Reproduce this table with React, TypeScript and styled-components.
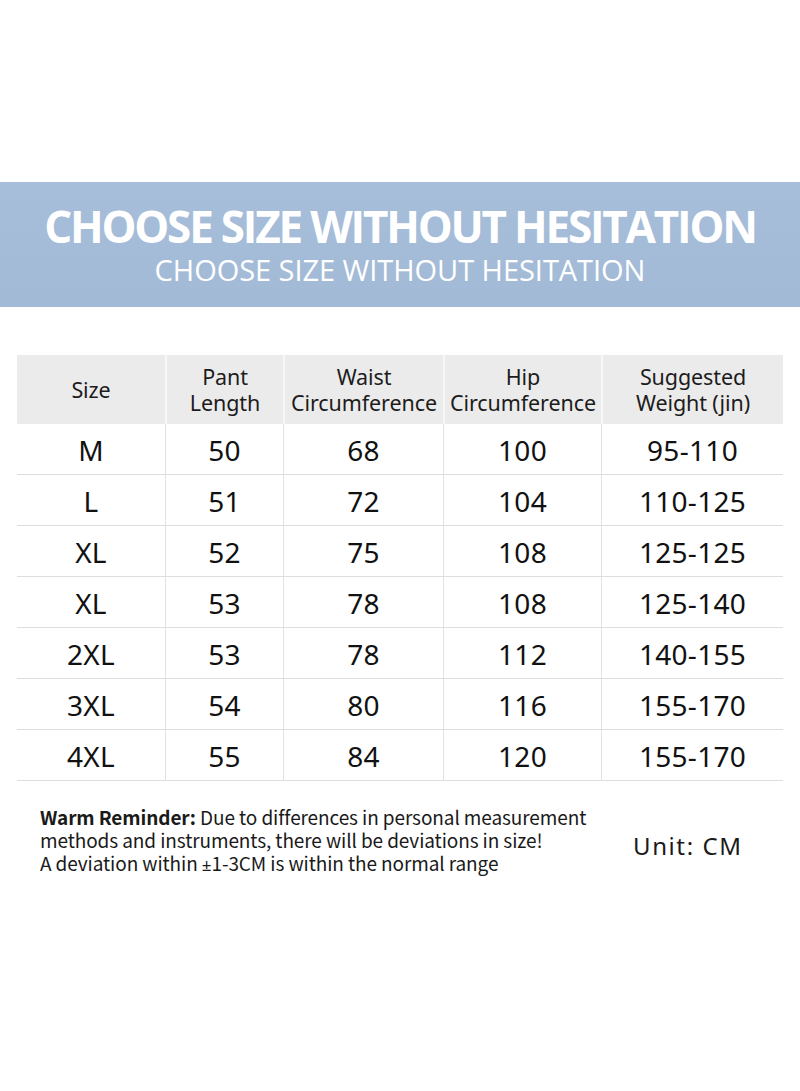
import React from "react";
import styled, { createGlobalStyle } from "styled-components";

const Global = createGlobalStyle`
  html, body { margin: 0; padding: 0; background: #ffffff; }
  body { font-family: "Noto Sans", "Open Sans", sans-serif; color: #1a1a1a; }
`;

const Page = styled.div`
  width: 800px;
  height: 1091px;
  background: #ffffff;
  padding-top: 182px;
  box-sizing: border-box;
  display: flex;
  flex-direction: column;
`;

const Banner = styled.header`
  height: 125px;
  background: linear-gradient(180deg, #a6bed9 0%, #a2bad6 100%);
  display: flex;
  flex-direction: column;
  align-items: center;
  justify-content: flex-start;
  padding-top: 17px;
  box-sizing: border-box;
  color: #ffffff;
`;

const Title = styled.h1`
  margin: 0;
  font-family: "Open Sans", "Noto Sans", sans-serif;
  font-weight: 700;
  font-size: 44px;
  line-height: 54px;
  letter-spacing: -2.2px;
  white-space: nowrap;
`;

const Subtitle = styled.h2`
  margin: 0;
  font-family: "Open Sans", "Noto Sans", sans-serif;
  font-weight: 400;
  font-size: 29px;
  line-height: 34px;
  letter-spacing: -0.05px;
  white-space: nowrap;
`;

const Table = styled.div`
  margin: 48px 17px 0 17px;
  display: grid;
  grid-template-columns: 148px 118px 160px 158px 182px;
`;

const HeadCell = styled.div<{ $first?: boolean }>`
  height: 69px;
  background: #ebebeb;
  border-left: ${(p) => (p.$first ? "none" : "2px solid #f7f7f7")};
  display: flex;
  align-items: center;
  justify-content: center;
  text-align: center;
  font-size: 21.5px;
  line-height: 26px;
  color: #1c1c1c;
  white-space: nowrap;
  letter-spacing: -0.1px;
  padding-top: 1px;
  box-sizing: border-box;
`;

const Cell = styled.div<{ $first?: boolean }>`
  height: 51px;
  border-left: ${(p) => (p.$first ? "none" : "1px solid #e2e2e2")};
  border-bottom: 1px solid #dedede;
  display: flex;
  align-items: center;
  justify-content: center;
  font-size: 28px;
  color: #111111;
  box-sizing: border-box;
  padding-top: 2px;
  letter-spacing: 0.3px;
`;

const Note = styled.div`
  margin: 24px 0 0 40px;
  display: flex;
  align-items: center;
`;

const NoteText = styled.p`
  margin: 0;
  width: 560px;
  font-family: "Noto Sans CJK SC", "Noto Sans", sans-serif;
  font-size: 19px;
  line-height: 23px;
  letter-spacing: -0.1px;
  white-space: nowrap;
  color: #1a1a1a;
`;

const Strong = styled.span`
  font-weight: 600;
`;

const PlusMinus = styled.span`
  font-family: "Noto Sans", sans-serif;
  font-size: 17px;
`;

const Unit = styled.div`
  margin-left: 33px;
  margin-top: 10px;
  font-size: 24px;
  color: #1a1a1a;
  letter-spacing: 1.6px;
`;

const headers = ["Size", "Pant\nLength", "Waist\nCircumference", "Hip\nCircumference", "Suggested\nWeight (jin)"];

const rows = [
  ["M", "50", "68", "100", "95-110"],
  ["L", "51", "72", "104", "110-125"],
  ["XL", "52", "75", "108", "125-125"],
  ["XL", "53", "78", "108", "125-140"],
  ["2XL", "53", "78", "112", "140-155"],
  ["3XL", "54", "80", "116", "155-170"],
  ["4XL", "55", "84", "120", "155-170"],
];

export default function App() {
  return (
    <Page>
      <Global />
      <Banner>
        <Title>CHOOSE SIZE WITHOUT HESITATION</Title>
        <Subtitle>CHOOSE SIZE WITHOUT HESITATION</Subtitle>
      </Banner>
      <Table>
        {headers.map((h, i) => (
          <HeadCell key={h} $first={i === 0}>
            <span>
              {h.split("\n").map((l, j) => (
                <React.Fragment key={j}>
                  {j > 0 && <br />}
                  {l}
                </React.Fragment>
              ))}
            </span>
          </HeadCell>
        ))}
        {rows.map((r, ri) =>
          r.map((c, ci) => (
            <Cell key={`${ri}-${ci}`} $first={ci === 0}>
              {c}
            </Cell>
          ))
        )}
      </Table>
      <Note>
        <NoteText>
          <Strong>Warm Reminder:</Strong> Due to differences in personal measurement
          <br />
          methods and instruments, there will be deviations in size!
          <br />A deviation within <PlusMinus>±</PlusMinus>1-3CM is within the normal range
        </NoteText>
        <Unit>Unit: CM</Unit>
      </Note>
    </Page>
  );
}
